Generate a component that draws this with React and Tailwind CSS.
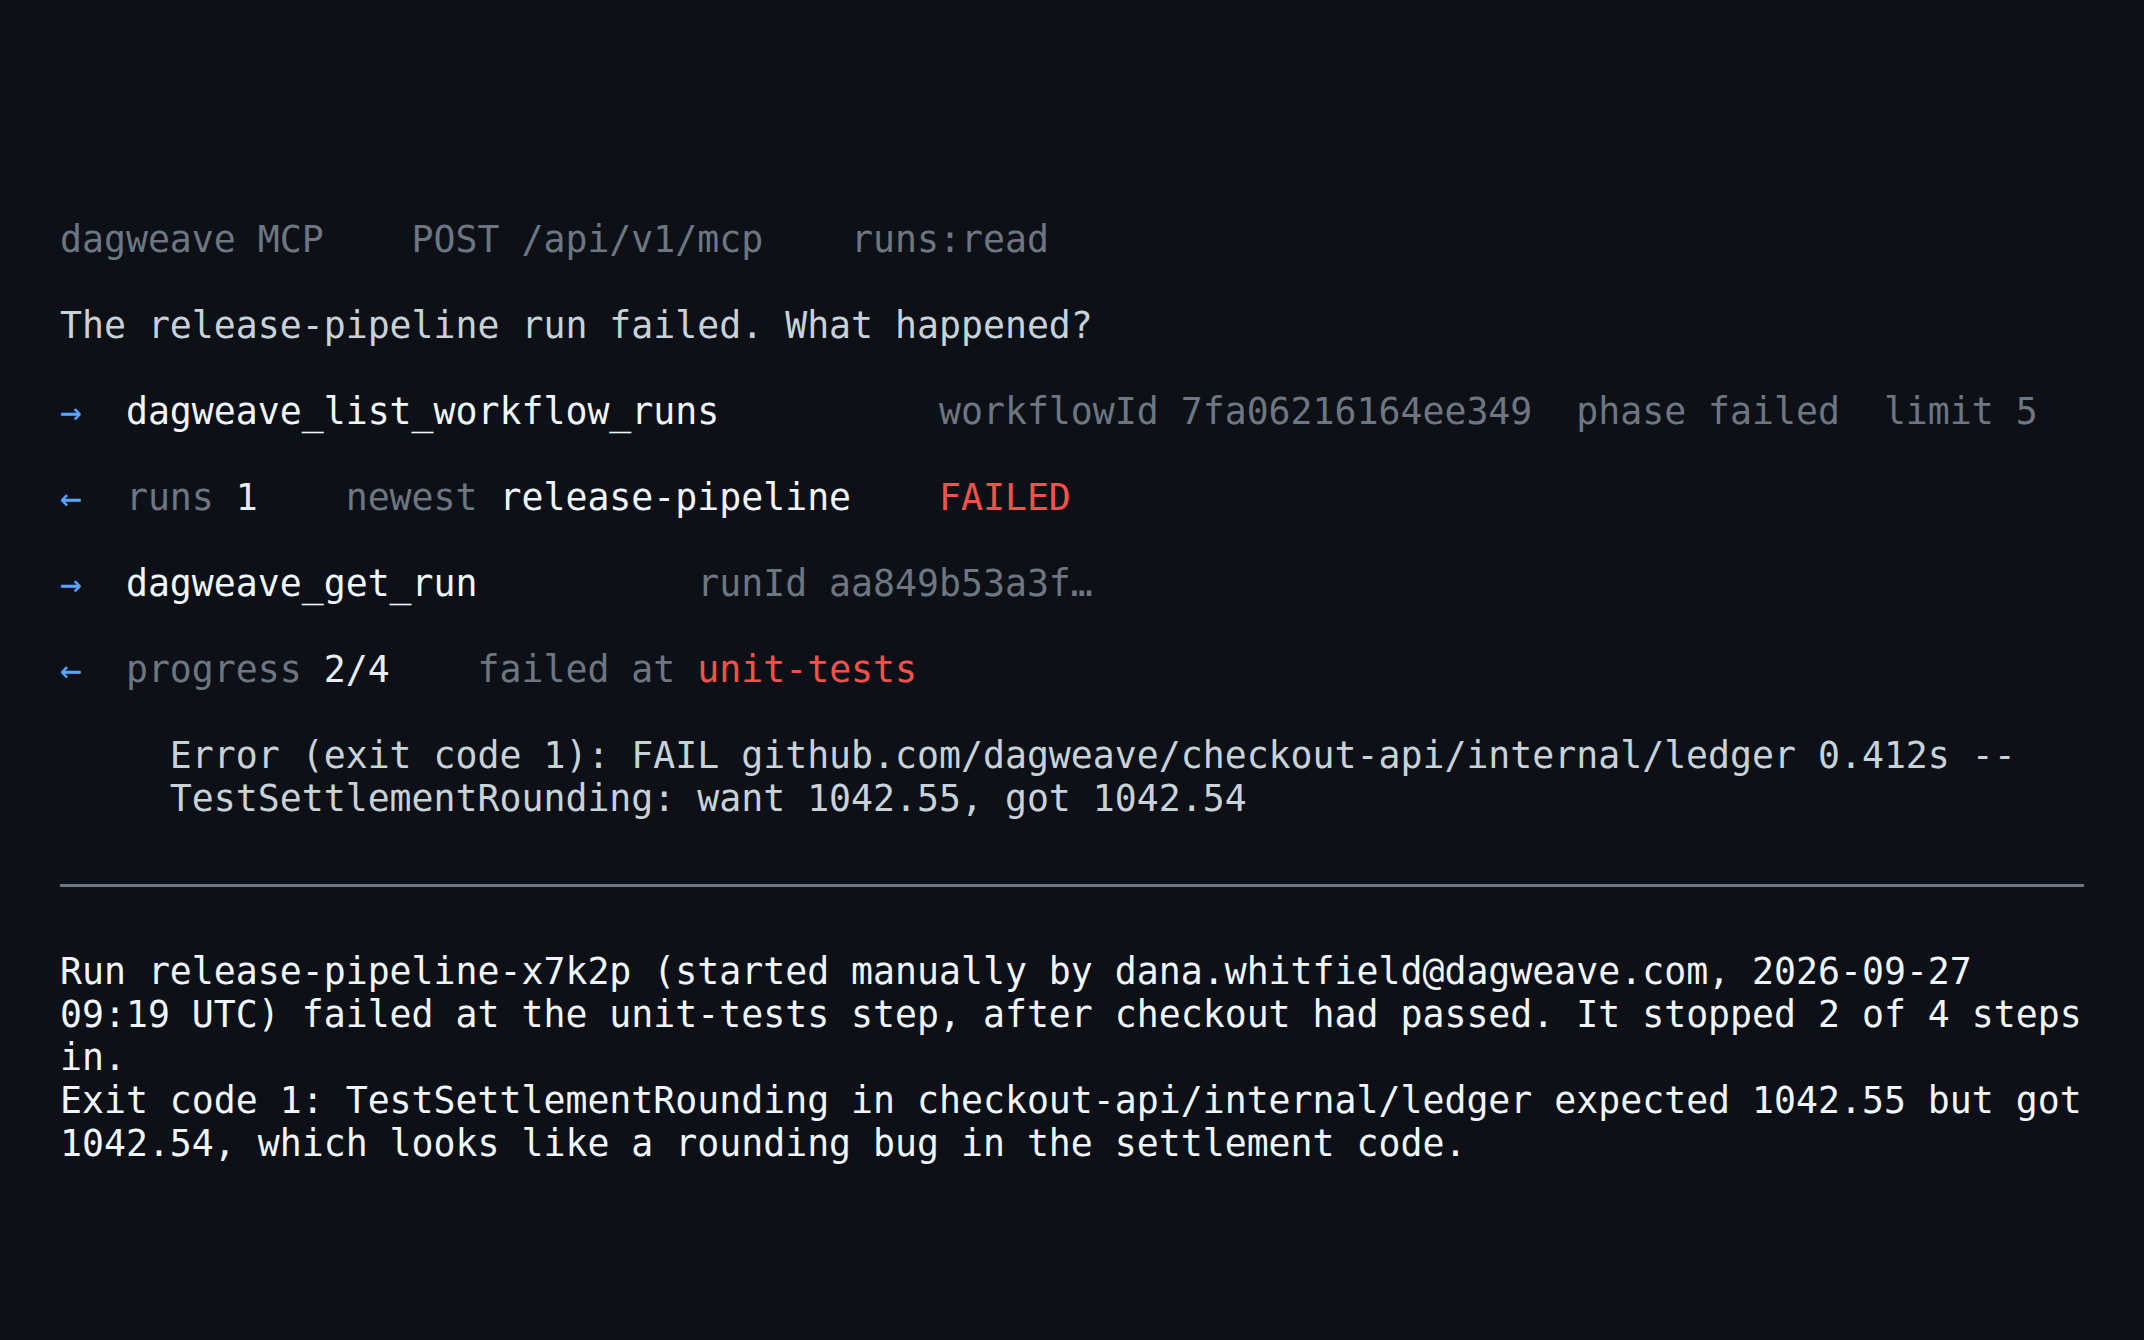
import React from "react";

const mono = { fontFamily: '"DejaVu Sans Mono", "Liberation Mono", monospace' };

const Arrow = ({ dir }) => (
  <span className="w-[3ch] shrink-0 text-[#58a6ff]">{dir === "out" ? "→" : "←"}</span>
);

const Call = ({ name, args, gap }) => (
  <div className="flex">
    <Arrow dir="out" />
    <span className="text-[#f0f6fc]">{name}</span>
    <span className="ml-[10ch] flex gap-[2ch] text-[#6e7681]">
      {args.map((a, i) => (
        <span key={i}>{a}</span>
      ))}
    </span>
  </div>
);

const App = () => {
  return (
    <div
      className="min-h-screen w-full bg-[#0d1117] px-[60px] pt-[218px] pb-[176px] text-[36.5px] leading-[43px]"
      style={mono}
    >
      <div className="flex flex-col gap-[43px]">
        {/* Header */}
        <div className="flex gap-[4ch] text-[#6e7681]">
          <span>dagweave MCP</span>
          <span>POST /api/v1/mcp</span>
          <span>runs:read</span>
        </div>

        <div className="text-[#c9d1d9]">The release-pipeline run failed. What happened?</div>

        <Call
          name="dagweave_list_workflow_runs"
          args={["workflowId 7fa06216164ee349", "phase failed", "limit 5"]}
        />

        <div className="flex">
          <Arrow dir="in" />
          <span className="flex gap-[4ch]">
            <span>
              <span className="text-[#6e7681]">runs </span>
              <span className="text-[#e6edf3]">1</span>
            </span>
            <span>
              <span className="text-[#6e7681]">newest </span>
              <span className="text-[#f0f6fc]">release-pipeline</span>
            </span>
            <span className="text-[#f85149]">FAILED</span>
          </span>
        </div>

        <Call name="dagweave_get_run" args={["runId aa849b53a3f…"]} />

        <div className="flex">
          <Arrow dir="in" />
          <span className="flex gap-[4ch]">
            <span>
              <span className="text-[#6e7681]">progress </span>
              <span className="text-[#e6edf3]">2/4</span>
            </span>
            <span>
              <span className="text-[#6e7681]">failed at </span>
              <span className="text-[#f85149]">unit-tests</span>
            </span>
          </span>
        </div>

        <div className="pl-[5ch] text-[#c9d1d9]">
          Error (exit code 1): FAIL github.com/dagweave/checkout-api/internal/ledger 0.412s --
          TestSettlementRounding: want 1042.55, got 1042.54
        </div>
      </div>

      <div className="mt-[64px] mb-[63px] h-[3px] bg-[#6e7681]" />

      <div className="text-[#f0f6fc]">
        <div>
          Run release-pipeline-x7k2p (started manually by dana.whitfield@dagweave.com, 2026-09-27
          09:19 UTC) failed at the unit-tests step, after checkout had passed. It stopped 2 of 4 steps
          in.
        </div>
        <div>
          Exit code 1: TestSettlementRounding in checkout-api/internal/ledger expected 1042.55 but got
          1042.54, which looks like a rounding bug in the settlement code.
        </div>
      </div>
    </div>
  );
};

export default App;
